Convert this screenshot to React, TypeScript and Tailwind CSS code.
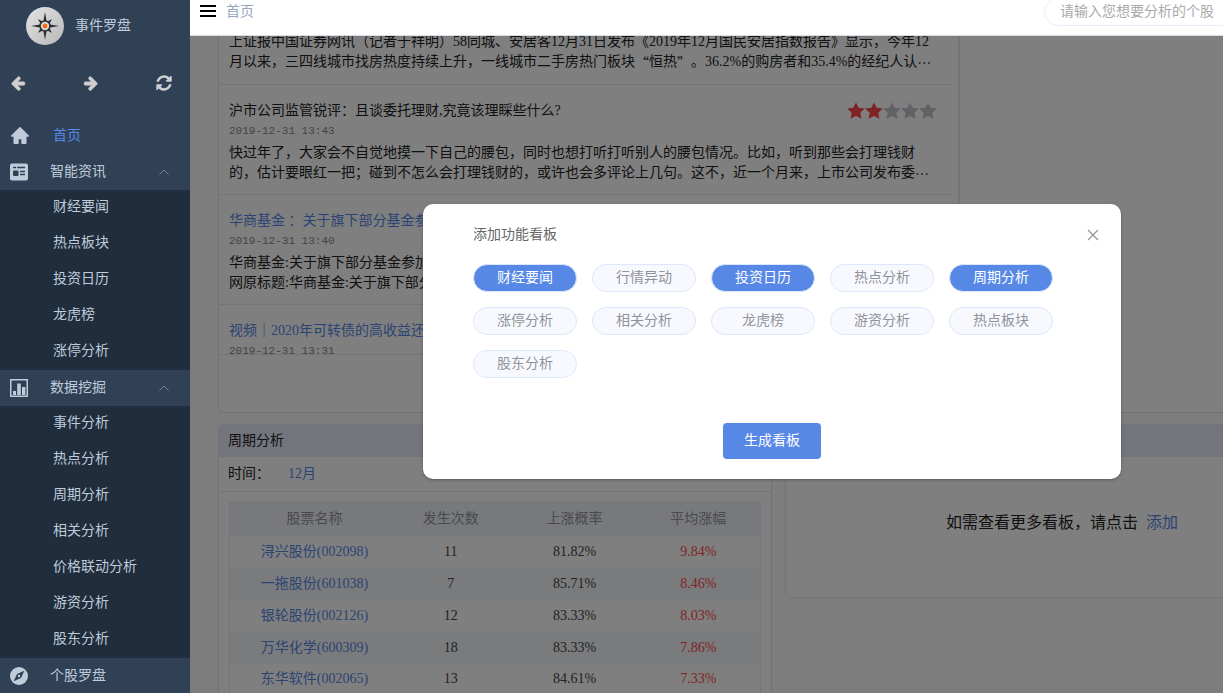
import React, { useState } from "react";
import clsx from "clsx";

const NEWS_GROUP = ["财经要闻", "热点板块", "投资日历", "龙虎榜", "涨停分析"];
const DATA_GROUP = [
  "事件分析",
  "热点分析",
  "周期分析",
  "相关分析",
  "价格联动分析",
  "游资分析",
  "股东分析",
];

const BOARDS = [
  "财经要闻",
  "行情异动",
  "投资日历",
  "热点分析",
  "周期分析",
  "涨停分析",
  "相关分析",
  "龙虎榜",
  "游资分析",
  "热点板块",
  "股东分析",
];

const STOCKS = [
  { name: "浔兴股份(002098)", times: 11, rate: "81.82%", avg: "9.84%" },
  { name: "一拖股份(601038)", times: 7, rate: "85.71%", avg: "8.46%" },
  { name: "银轮股份(002126)", times: 12, rate: "83.33%", avg: "8.03%" },
  { name: "万华化学(600309)", times: 18, rate: "83.33%", avg: "7.86%" },
  { name: "东华软件(002065)", times: 13, rate: "84.61%", avg: "7.33%" },
];

type IconProps = { className?: string };

const Logo = () => (
  <svg viewBox="0 0 38 38" className="size-[38px] shrink-0">
    <defs>
      <linearGradient id="dial" x1="0" y1="0" x2="1" y2="1">
        <stop offset="0" stopColor="#e2e2e2" />
        <stop offset="1" stopColor="#b9b9b9" />
      </linearGradient>
    </defs>
    <circle cx="19" cy="19" r="19" fill="url(#dial)" />
    <g fill="#2b3036">
      <path d="M19 5l1.6 9h-3.2zM19 33l1.6-9h-3.2zM5 19l9-1.6v3.2zM33 19l-9-1.6v3.2z" />
      <path d="M12 12l4.6 2.4-2.2 2.2zM26 12l-4.6 2.4 2.2 2.2zM12 26l4.6-2.4-2.2-2.2zM26 26l-4.6-2.4 2.2-2.2z" />
    </g>
    <circle cx="19" cy="19" r="5" fill="#d8d8d8" stroke="#2b3036" strokeWidth="1.6" />
    <circle cx="19" cy="19" r="2.4" fill="#ff6a0d" />
  </svg>
);

const ArrowIcon = ({ className }: IconProps) => (
  <svg
    viewBox="0 0 1792 1792"
    fill="currentColor"
    stroke="currentColor"
    strokeWidth="60"
    className={clsx("size-4", className)}
  >
    <path d="M1664 896v128q0 53-32.5 90.5t-84.5 37.5h-704l293 294q38 36 38 90t-38 90l-75 76q-37 37-90 37-52 0-91-37l-651-652q-37-37-37-90 0-52 37-91l651-650q38-38 91-38 52 0 90 38l75 74q38 38 38 91t-38 91l-293 293h704q52 0 84.5 37.5t32.5 90.5z" />
  </svg>
);

const RefreshIcon = () => (
  <svg viewBox="0 0 1792 1792" fill="currentColor" className="size-[18px]">
    <path d="M1639 1056q0 5-1 7-64 268-268 434.5t-478 166.5q-146 0-282.5-55t-243.5-157l-129 129q-19 19-45 19t-45-19-19-45v-448q0-26 19-45t45-19h448q26 0 45 19t19 45-19 45l-137 137q71 66 161 102t187 36q134 0 250-65t186-179q11-17 53-117 8-23 30-23h192q13 0 22.5 9.5t9.5 22.5zm25-800v448q0 26-19 45t-45 19h-448q-26 0-45-19t-19-45 19-45l138-138q-148-137-349-137-134 0-250 65t-186 179q-11 17-53 117-8 23-30 23h-199q-13 0-22.5-9.5t-9.5-22.5v-7q65-268 270-434.5t480-166.5q146 0 284 55.5t245 156.5l130-129q19-19 45-19t45 19 19 45z" />
  </svg>
);

const HomeIcon = () => (
  <svg viewBox="0 0 20 20" className="size-5" fill="currentColor">
    <path
      d="M10 1.800L1.800 10h2.500v7.200h3.600V12.500h4.200v4.700h3.600V10h2.500z"
      stroke="currentColor"
      strokeWidth="1.600"
      strokeLinejoin="round"
    />
  </svg>
);

const NewsIcon = () => (
  <svg viewBox="0 0 18 18" className="size-[18px]">
    <rect y="0.500" width="18" height="17" rx="2" fill="currentColor" />
    <path d="M3 4.500h3M7 4.500h8M10 8.500h5M10 11.500h5" stroke="#304156" strokeWidth="1.300" />
    <rect x="3" y="7.500" width="5.500" height="5.500" rx="1" fill="#304156" />
  </svg>
);

const ChartIcon = () => (
  <svg viewBox="0 0 18 18" className="size-[18px]">
    <rect x="0.750" y="0.750" width="16.500" height="16.500" fill="none" stroke="currentColor" strokeWidth="1.500" />
    <path d="M3 12h3v4H3zM7.200 4.500h3.600V16H7.200zM12 8h3.400v8H12z" fill="currentColor" />
  </svg>
);

const CompassIcon = () => (
  <svg viewBox="0 0 18 18" className="size-[18px]">
    <circle cx="9" cy="9" r="9" fill="currentColor" />
    <path d="M14.300 3.700L11 11l-7.300 3.300L7 7z" fill="#304156" />
    <circle cx="9" cy="9" r="1.300" fill="currentColor" />
  </svg>
);

const ChevronUp = () => (
  <svg viewBox="0 0 10 6" className="w-[10px] h-[6px] mr-[21px] ml-auto text-[#76859a]">
    <path d="M0.500 5.500L5 1l4.500 4.500" fill="none" stroke="currentColor" />
  </svg>
);

const Stars = ({ score }: { score: number }) => (
  <div className="flex shrink-0">
    {[1, 2, 3, 4, 5].map((n) => (
      <svg
        key={n}
        viewBox="0 0 18 18"
        fill="currentColor"
        className={clsx("size-[18px]", n <= score ? "text-[#ff4949]" : "text-[#c0c4cc]")}
      >
        <path d="M9 .5l2.700 5.300 6.100.8-4.500 4.200 1.200 6L9 14l-5.500 2.800 1.200-6L.2 6.600l6.100-.8z" />
      </svg>
    ))}
  </div>
);

// quotes and ellipsis are taken from the CJK face, the rest follows the page font
const Body = ({ lines }: { lines: string[] }) => (
  <div className="text-[#222]">
    {lines.map((line) => (
      <p key={line} className="h-5 leading-5 whitespace-nowrap">
        {line.split(/([“”…])/).map((part, i) =>
          /[“”…]/.test(part) ? (
            <span
              key={i}
              className="inline-block h-5 align-top font-['Noto_Sans_CJK_SC',sans-serif]"
            >
              {part}
            </span>
          ) : (
            part
          )
        )}
      </p>
    ))}
  </div>
);

const NewsItem = ({
  title,
  date,
  lines,
  score,
  link,
}: {
  title: string;
  date: string;
  lines?: string[];
  score?: number;
  link?: boolean;
}) => (
  <article className="mr-[6px] px-[10px] pt-4 pb-[11px] border-b border-[#e2e9f5]">
    <div className="flex items-center justify-between h-5 pr-[5px]">
      <h3 className={clsx("whitespace-nowrap", link ? "text-[#5788e6]" : "text-[#222]")}>
        {title}
      </h3>
      {score && <Stars score={score} />}
    </div>
    <time className="block mb-[2px] leading-5 text-[11px] text-[#888] font-['Liberation_Mono',monospace]">
      {date}
    </time>
    {lines && <Body lines={lines} />}
  </article>
);

const MenuGroup = ({
  icon,
  label,
  items,
}: {
  icon: React.ReactNode;
  label: string;
  items: string[];
}) => (
  <li>
    <button type="button" className="flex items-center w-full h-9 pl-[10px]">
      {icon}
      <span className="ml-[22px]">{label}</span>
      <ChevronUp />
    </button>
    <ul className="bg-[#1f2d3d]">
      {items.map((item) => (
        <li key={item}>
          <a href="#" className="flex items-center h-9 pb-[2px] pl-[53px]">
            {item}
          </a>
        </li>
      ))}
    </ul>
  </li>
);

const Sidebar = () => (
  <aside className="w-[190px] shrink-0 bg-[#304156] text-[#bfcbd9] overflow-hidden">
    <div className="flex items-center gap-[11px] h-[52px] pl-[26px]">
      <Logo />
      <span>事件罗盘</span>
    </div>
    <div className="flex justify-between h-[66px] pt-[22px] pl-[10px] pr-[17px] text-[#cfcfcf]">
      <button type="button" aria-label="后退" className="h-[18px]">
        <ArrowIcon />
      </button>
      <button type="button" aria-label="前进" className="h-[18px]">
        <ArrowIcon className="-scale-x-100" />
      </button>
      <button type="button" aria-label="刷新" className="h-[18px]">
        <RefreshIcon />
      </button>
    </div>
    <nav>
      <ul>
        <li>
          <a href="#" className="flex items-center h-9 pl-[10px]">
            <HomeIcon />
            <span className="ml-[23px] text-[#5788e6]">首页</span>
          </a>
        </li>
        <MenuGroup icon={<NewsIcon />} label="智能资讯" items={NEWS_GROUP} />
        <MenuGroup icon={<ChartIcon />} label="数据挖掘" items={DATA_GROUP} />
        <li>
          <a href="#" className="flex items-center h-9 pl-[10px]">
            <CompassIcon />
            <span className="ml-[22px]">个股罗盘</span>
          </a>
        </li>
      </ul>
    </nav>
  </aside>
);

const Header = () => (
  <header className="flex items-center justify-between min-w-[1164px] h-9 shrink-0 pb-3 pl-[10px] bg-white border-b border-[#d8dce5]">
    <div className="flex items-center gap-[10px]">
      <button type="button" aria-label="菜单">
        <svg viewBox="0 0 16 14" className="w-4 h-[14px]">
          <path d="M0 1h16M0 6h16M0 11h16" stroke="#000" strokeWidth="2" />
        </svg>
      </button>
      <a href="#" className="text-[#97a8be]">
        首页
      </a>
    </div>
    <input
      type="text"
      aria-label="搜索个股"
      placeholder="请输入您想要分析的个股"
      className="w-[290px] h-7 mr-5 px-[15px] shrink-0 rounded-full border border-[#e6effa] outline-none placeholder:text-[#aaa]"
    />
  </header>
);

const CyclePanel = () => (
  <section className="border border-[#e2e6f5] rounded-md bg-white overflow-hidden">
    <h2 className="flex items-center h-8 px-[9px] bg-[#e6ebfa] text-[#222]">周期分析</h2>
    <div className="flex items-center gap-[18px] h-[35px] px-[9px] border-b border-[#e8ebf5]">
      <span className="text-[#222]">时间：</span>
      <a href="#" className="text-[#5788e6]">
        12月
      </a>
    </div>
    <div className="p-[10px]">
      <table className="w-full table-fixed text-center border border-[#e6ebf5] text-[#444]">
        <thead>
          <tr className="h-[33px] bg-[#f0f3f9] text-[#909399]">
            <th className="w-[30%] pl-[10px] font-normal">股票名称</th>
            <th className="font-normal">发生次数</th>
            <th className="font-normal">上涨概率</th>
            <th className="font-normal">平均涨幅</th>
          </tr>
        </thead>
        <tbody>
          {STOCKS.map((s) => (
            <tr key={s.name} className="h-8 even:bg-[#f4f7fa]">
              <td className="pl-[10px]">
                <a href="#" className="text-[#5788e6]">
                  {s.name}
                </a>
              </td>
              <td>{s.times}</td>
              <td>{s.rate}</td>
              <td className="text-[#ff4949]">{s.avg}</td>
            </tr>
          ))}
        </tbody>
      </table>
    </div>
  </section>
);

const BoardDialog = () => {
  const [picked, setPicked] = useState(["财经要闻", "投资日历", "周期分析"]);

  const toggle = (name: string) =>
    setPicked((prev) =>
      prev.includes(name) ? prev.filter((p) => p !== name) : [...prev, name]
    );

  return (
    <div
      role="dialog"
      aria-labelledby="board-title"
      className="w-[698px] px-[50px] pt-[21px] pb-5 rounded-[10px] bg-white shadow-[0_1px_3px_rgba(0,0,0,0.3)]"
    >
      <div className="flex items-center justify-between h-5 mb-[19px] -mr-7">
        <h2 id="board-title" className="text-[#666]">
          添加功能看板
        </h2>
        <button type="button" aria-label="关闭" className="text-[#909399]">
          <svg viewBox="0 0 12 12" className="size-3">
            <path d="M1 1l10 10M11 1L1 11" stroke="currentColor" strokeWidth="1.200" />
          </svg>
        </button>
      </div>
      <div className="flex flex-wrap gap-[15px]">
        {BOARDS.map((name) => {
          const on = picked.includes(name);
          return (
            <button
              key={name}
              type="button"
              aria-pressed={on}
              onClick={() => toggle(name)}
              className={clsx(
                "w-[104px] h-7 rounded-full border border-[#dce8fa]",
                on ? "bg-[#5788e6] text-white" : "bg-[#f8f9ff] text-[#909399]"
              )}
            >
              {name}
            </button>
          );
        })}
      </div>
      <div className="flex justify-center mt-[45px]">
        <button type="button" className="h-9 px-[21px] rounded bg-[#5788e6] text-white">
          生成看板
        </button>
      </div>
    </div>
  );
};

export default function App() {
  return (
    <div className="flex h-screen overflow-hidden text-sm font-['Liberation_Serif','Noto_Sans_CJK_SC',sans-serif]">
      <Sidebar />
      <div className="flex flex-col flex-1 min-w-0 overflow-hidden">
        <Header />
        <main className="relative flex-1 min-h-0 min-w-[1164px] overflow-hidden bg-[#fbfbfb]">
          <div className="pl-7 pr-[15px]">
            <section className="border border-t-0 border-[#e2e6f5] rounded-b-md bg-white">
              <div className="w-[741px] h-[319px] overflow-hidden border-b border-b-[#e2e9f5] border-r-2 border-r-[#e8e8e8]">
                <div className="-mt-1 mr-[6px] px-[10px] pb-3 border-b border-[#e2e9f5]">
                  <Body
                    lines={[
                      "上证报中国证券网讯（记者于祥明）58同城、安居客12月31日发布《2019年12月国民安居指数报告》显示，今年12",
                      "月以来，三四线城市找房热度持续上升，一线城市二手房热门板块“恒热”。36.2%的购房者和35.4%的经纪人认…",
                    ]}
                  />
                </div>
                <NewsItem
                  title="沪市公司监管锐评：且谈委托理财,究竟该理睬些什么?"
                  date="2019-12-31 13:43"
                  score={2}
                  lines={[
                    "快过年了，大家会不自觉地摸一下自己的腰包，同时也想打听打听别人的腰包情况。比如，听到那些会打理钱财",
                    "的，估计要眼红一把；碰到不怎么会打理钱财的，或许也会多评论上几句。这不，近一个月来，上市公司发布委…",
                  ]}
                />
                <NewsItem
                  link
                  title="华商基金 ：关于旗下部分基金参加"
                  date="2019-12-31 13:40"
                  lines={["华商基金:关于旗下部分基金参加", "网原标题:华商基金:关于旗下部分基金"]}
                />
                <NewsItem
                  link
                  title="视频｜2020年可转债的高收益还"
                  date="2019-12-31 13:31"
                />
              </div>
              <div className="h-[57px]" />
            </section>

            <div className="grid grid-cols-2 items-start gap-[13px] mt-[11px]">
              <CyclePanel />
              <section className="border border-[#e2e6f5] rounded-md bg-white overflow-hidden">
                <div className="h-8 bg-[#e6ebfa]" />
                <p className="flex items-center justify-center gap-2 h-[140px] pb-[8px] text-base text-[#222]">
                  如需查看更多看板，请点击
                  <a href="#" className="text-[#5788e6]">
                    添加
                  </a>
                </p>
              </section>
            </div>
          </div>

          {/* modal layer */}
          <div className="absolute inset-0 flex items-start justify-center pt-[168px] bg-black/50">
            <BoardDialog />
          </div>
        </main>
      </div>
    </div>
  );
}
